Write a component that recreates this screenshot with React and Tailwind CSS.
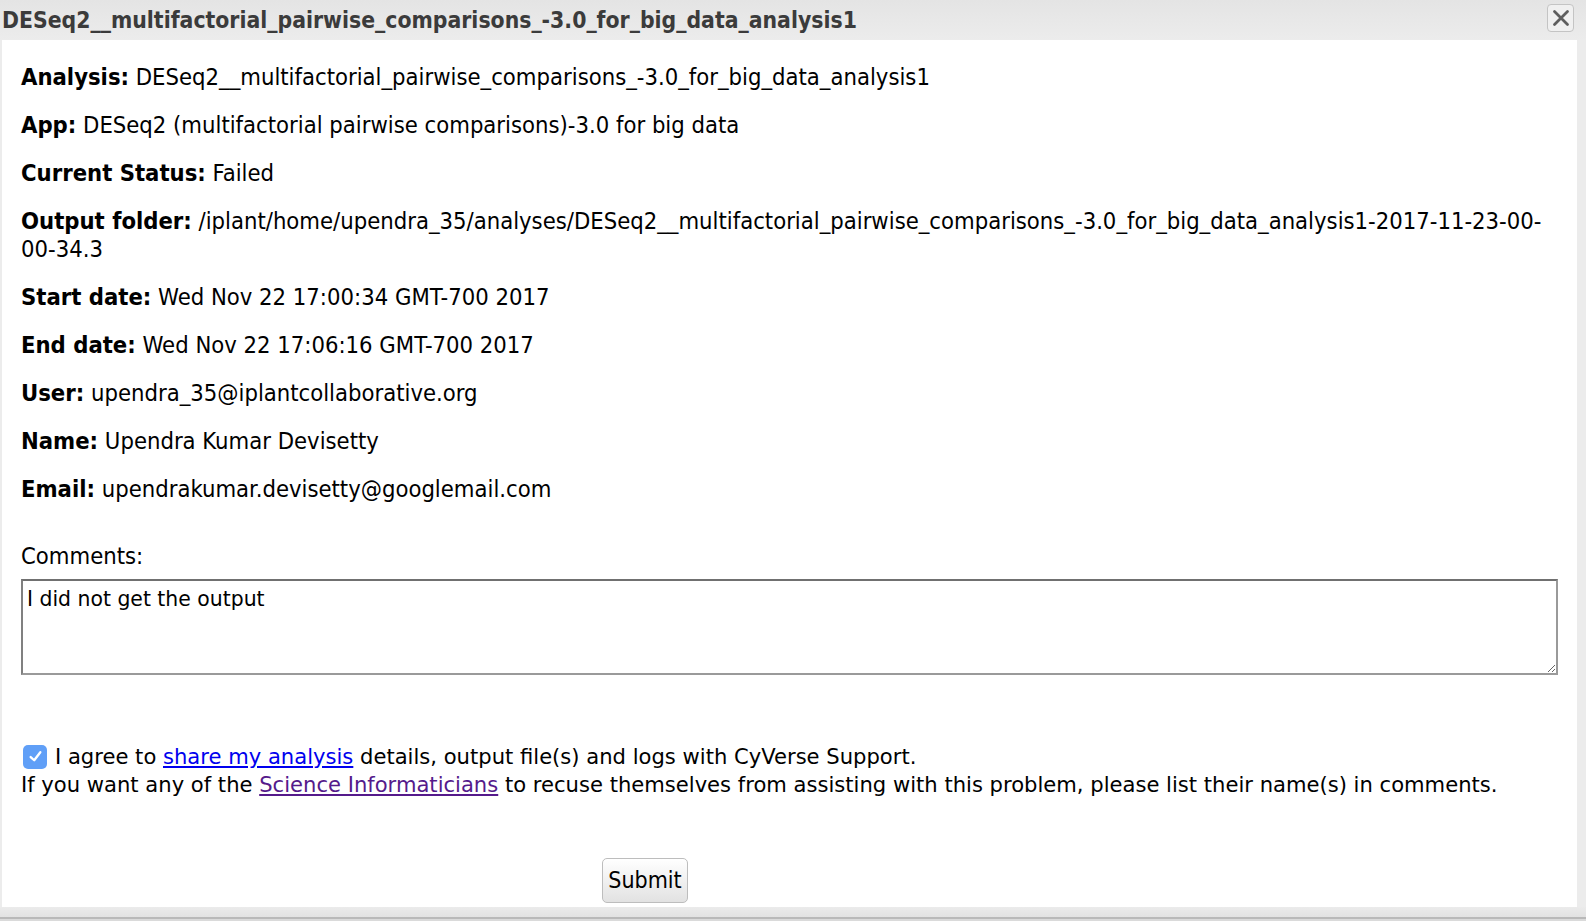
import React, { useState } from 'react';

const tahoma = "font-['DejaVu_Sans_Condensed','DejaVu_Sans',sans-serif] font-stretch-condensed";
const verdana = "font-['DejaVu_Sans',sans-serif]";

const fields = [
  ['Analysis:', 'DESeq2__multifactorial_pairwise_comparisons_-3.0_for_big_data_analysis1'],
  ['App:', 'DESeq2 (multifactorial pairwise comparisons)-3.0 for big data'],
  ['Current Status:', 'Failed'],
  ['Output folder:', (
    <>/iplant/home/upendra_35/analyses/DESeq2__multifactorial_pairwise_comparisons_-3.0_for_big_data_analysis1-2017-11-23-00-<wbr />00-34.3</>
  )],
  ['Start date:', 'Wed Nov 22 17:00:34 GMT-700 2017'],
  ['End date:', 'Wed Nov 22 17:06:16 GMT-700 2017'],
  ['User:', 'upendra_35@iplantcollaborative.org'],
  ['Name:', 'Upendra Kumar Devisetty'],
  ['Email:', 'upendrakumar.devisetty@googlemail.com'],
];

const App = () => {
  const [comment, setComment] = useState('I did not get the output');
  const [agree, setAgree] = useState(true);

  return (
    <div className="w-full h-screen flex flex-col bg-[#ececec] overflow-hidden text-black">
      {/* Title bar */}
      <div className="relative h-[40px] shrink-0 bg-gradient-to-b from-[#e4e4e4] to-[#ececec] flex items-center">
        <span className={`${tahoma} pl-[2px] text-[22.75px] font-bold text-[#3b3b3b] whitespace-nowrap`}>
          DESeq2__multifactorial_pairwise_comparisons_-3.0_for_big_data_analysis1
        </span>
        <button className="absolute right-[12px] top-[4px] w-[27px] h-[28px] rounded-[4px] border border-[#c4c4c4] bg-[#f0f0f0] flex items-center justify-center">
          <svg width="20" height="20" viewBox="0 0 20 20">
            <path d="M3.5 3.5 L16.5 16.5 M16.5 3.5 L3.5 16.5" stroke="#5e5e5e" strokeWidth="2.8" strokeLinecap="round" />
          </svg>
        </button>
      </div>

      <div className="flex-1 flex min-h-0">
        <div className="w-[2px] bg-[#ececec]" />
        <div className="flex-1 bg-white px-[19px] pt-[24px]">
          {fields.map(([label, value]) => (
            <p key={label} className={`${tahoma} text-[23.6px] leading-[27.5px] mb-[20.5px] break-words`}>
              <b>{label}</b> {value}
            </p>
          ))}

          <div className={`${tahoma} text-[23.6px] leading-[27.5px] mt-[40px]`}>Comments:</div>
          <textarea
            value={comment}
            onChange={(e) => setComment(e.target.value)}
            className={`${verdana} mt-[8px] block w-full h-[96px] border-2 border-t-[#707070] border-l-[#808080] border-r-[#9a9a9a] border-b-[#9a9a9a] px-[4px] pt-[6px] text-[20.4px] leading-[24px] outline-none resize-y`}
          />

          <div className={`${verdana} mt-[68px] text-[21.1px] leading-[28.5px]`}>
            <div className="flex items-center">
              <span
                onClick={() => setAgree(!agree)}
                className={`ml-[2px] mr-[8px] w-[24px] h-[24px] rounded-[5px] flex items-center justify-center ${agree ? 'bg-[#609ff7]' : 'bg-white border border-gray-400'}`}
              >
                {agree && (
                  <svg width="15" height="15" viewBox="0 0 14 14">
                    <path d="M2.5 7.5 L5.8 10.5 L11.5 3" stroke="white" strokeWidth="2.2" fill="none" strokeLinecap="round" strokeLinejoin="round" />
                  </svg>
                )}
              </span>
              <span>
                I agree to <a href="#" className="text-[#0000ee] underline">share my analysis</a> details, output file(s) and logs with CyVerse Support.
              </span>
            </div>
            <div>
              If you want any of the <a href="#" className="text-[#551a8b] underline">Science Informaticians</a> to recuse themselves from assisting with this problem, please list their name(s) in comments.
            </div>
          </div>

          <button className={`${tahoma} mt-[58px] ml-[581px] w-[86px] h-[45px] rounded-[5px] border border-[#bdbdbd] bg-gradient-to-b from-[#ffffff] to-[#e2e2e2] text-[23px]`}>
            Submit
          </button>
        </div>
        <div className="w-[9px] bg-[#ececec]" />
      </div>

      {/* Bottom band */}
      <div className="h-[14px] shrink-0 flex flex-col">
        <div className="h-[10px] bg-gradient-to-b from-[#ebebeb] to-[#e2e2e2]" />
        <div className="h-[2px] bg-[#b9b9b9]" />
        <div className="flex-1 bg-[#dadada]" />
      </div>
    </div>
  );
};

export default App;
